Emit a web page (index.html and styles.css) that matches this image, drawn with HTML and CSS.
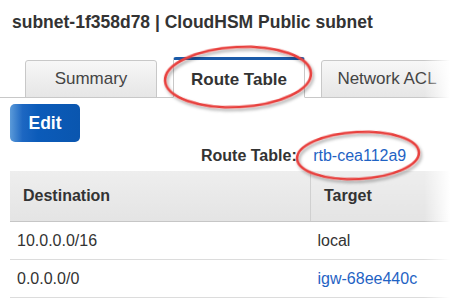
FILE: index.html
```html
<!DOCTYPE html>
<html lang="en">
<head>
    <meta charset="UTF-8">
    <title>subnet-1f358d78 | CloudHSM Public subnet</title>
    <link rel="stylesheet" href="styles.css">
</head>
<body>
    <div class="page">
        <!-- subnet title -->
        <h1 class="title">subnet-1f358d78 | CloudHSM Public subnet</h1>

        <!-- tabs -->
        <div class="tabs">
            <div class="tab">Summary</div>
            <div class="tab active">Route Table</div>
            <div class="tab">Network ACL</div>
        </div>

        <div class="panel">
            <button class="btn-edit">Edit</button>

            <div class="route-info">
                <span class="route-label">Route Table:</span>
                <a class="link" href="#">rtb-cea112a9</a>
            </div>

            <table class="routes">
                <thead>
                    <tr>
                        <th class="col-dest">Destination</th>
                        <th>Target</th>
                    </tr>
                </thead>
                <tbody>
                    <tr>
                        <td>10.0.0.0/16</td>
                        <td>local</td>
                    </tr>
                    <tr>
                        <td>0.0.0.0/0</td>
                        <td><a class="link" href="#">igw-68ee440c</a></td>
                    </tr>
                </tbody>
            </table>
        </div>

        <!-- screenshot annotations -->
        <svg class="marks" width="450" height="303" viewBox="0 0 450 303">
            <defs>
                <filter id="shadow" x="-20%" y="-20%" width="140%" height="160%">
                    <feDropShadow dx="1.5" dy="2.5" stdDeviation="1.5" flood-color="#000" flood-opacity="0.35"/>
                </filter>
            </defs>
            <ellipse cx="238" cy="77" rx="73" ry="30" transform="rotate(-3 238 77)" filter="url(#shadow)"/>
            <ellipse cx="358" cy="155.5" rx="61" ry="23.5" transform="rotate(-3 358 155.5)" filter="url(#shadow)"/>
        </svg>

        <div class="fade"></div>
    </div>
</body>
</html>
```

FILE: styles.css
```css
/* base */
body {
    margin: 0;
    background: #fff;
    font-family: 'Liberation Sans', Arial, sans-serif;
    color: #333;
    overflow: hidden;
}

.page {
    position: relative;
    width: 450px;
    height: 303px;
    overflow: hidden;
}

.title {
    margin: 0;
    padding: 12px 0 0 12px;
    font-size: 17.5px;
    line-height: 20px;
    font-weight: bold;
    color: #333;
    white-space: nowrap;
}

/* tabs */
.tabs {
    display: flex;
    align-items: flex-end;
    gap: 16px;
    margin-top: 25px;
    padding-left: 25px;
    border-bottom: 1px solid #c8c8c8;
    height: 40px;
}

.tab {
    flex: 0 0 auto;
    width: 130px;
    height: 36px;
    margin-bottom: -1px;
    border: 1px solid #c8c8c8;
    border-radius: 3px 3px 0 0;
    background: linear-gradient(#f7f7f7, #e6e6e6);
    font-size: 17px;
    line-height: 36px;
    text-align: center;
    color: #444;
    white-space: nowrap;
}

.tab.active {
    height: 37px;
    border-top: 3px solid #1a5aa8;
    border-bottom-color: #fff;
    background: #fff;
    font-weight: bold;
    line-height: 40px;
    color: #333;
}

/* panel */
.panel {
    padding: 6px 0 0 10px;
}

.btn-edit {
    display: block;
    width: 70px;
    height: 38px;
    padding: 0;
    border: none;
    border-radius: 5px;
    background: linear-gradient(to right, #5b9ad9 0, #1d67c2 18%, #0b5bb9 40%, #0a56af 100%);
    color: #fff;
    font-family: inherit;
    font-size: 17.5px;
    font-weight: bold;
    text-align: center;
}

.route-info {
    padding: 4px 0 0 191px;
    height: 25px;
    font-size: 16px;
    line-height: 20px;
}

.route-label {
    font-weight: bold;
    margin-right: 12px;
}

.link {
    color: #1f63c4;
    text-decoration: none;
}

/* route table */
.routes {
    width: 460px;
    border-collapse: collapse;
    font-size: 16px;
}

.routes th {
    height: 50px;
    padding: 0 0 0 13px;
    text-align: left;
    font-weight: bold;
    background: linear-gradient(#eeeeee, #e4e4e4);
    border-bottom: 1px solid #c6c6c6;
}

.routes th.col-dest {
    width: 287px;
    border-right: 1px solid #d0d0d0;
}

.routes td {
    height: 37px;
    padding: 0 0 0 7px;
    border-bottom: 1px solid #dcdcdc;
    color: #333;
}

/* annotations */
.marks {
    position: absolute;
    top: 0;
    left: 0;
    pointer-events: none;
}

.marks ellipse {
    fill: none;
    stroke: #e8403e;
    stroke-width: 2.6;
}

.fade {
    position: absolute;
    top: 0;
    right: 0;
    width: 26px;
    height: 303px;
    background: linear-gradient(to right, rgba(255,255,255,0), #fff);
    pointer-events: none;
}
```
